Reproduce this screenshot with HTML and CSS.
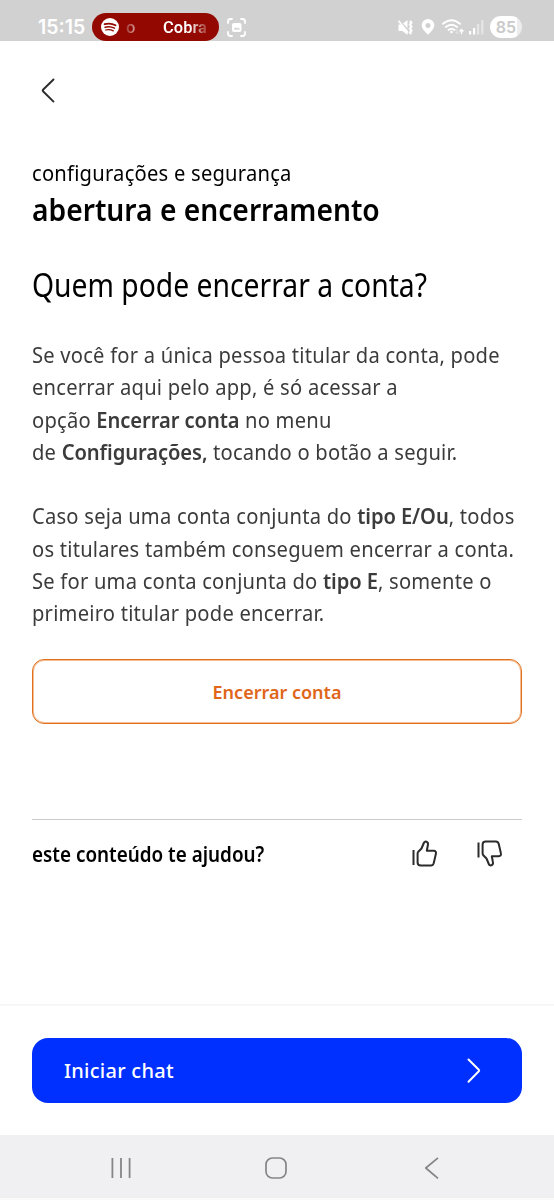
FILE: index.html
```html
<!DOCTYPE html>
<html lang="pt-BR">
<head>
<meta charset="utf-8">
<title>abertura e encerramento</title>
<link rel="stylesheet" href="styles.css">
</head>
<body>
<div class="screen">
  <header class="status">
    <span class="clock">15:15</span>
    <div class="media">
      <svg class="spotify" width="18" height="18" viewBox="0 0 18 18"><circle cx="9" cy="9" r="9" fill="#fff"/><g fill="none" stroke="#930800" stroke-linecap="round"><path d="M3.600 6.200q5.800-1.700 10.900 1.100" stroke-width="1.800"/><path d="M4.100 9.200q5-1.400 9.300 1" stroke-width="1.500"/><path d="M4.600 12q4.200-1 7.700.9" stroke-width="1.200"/></g></svg>
      <span class="track-end">o</span>
      <span class="track-start">Cobra</span>
    </div>
    <svg class="capture" width="19" height="19" viewBox="0 0 19 19" fill="none" stroke="#fff" stroke-width="1.800" stroke-linecap="round"><path d="M1 5V3.500Q1 1 3.500 1H5M14 1h1.500Q18 1 18 3.500V5M18 14v1.500Q18 18 15.500 18H14M5 18H3.500Q1 18 1 15.500V14"/><rect x="5" y="5" width="9.500" height="9" rx="2" fill="#fff" stroke="none"/><path d="M6.500 11.500l2-2.200 1.600 1.200 1.300-1 1.700 2z" fill="#d1d1d1" stroke="none"/></svg>
    <div class="indicators">
      <svg class="mute" width="17" height="17" viewBox="0 0 17 17"><path d="M1.500 5.500h3L10.500 12v4L5.500 12h-4z" fill="#fff"/><path d="M6 4.500L10.500 1v8z" fill="#fff"/><path d="M1.500 1.800L11 13.500" stroke="#fff" stroke-width="1.700"/><path d="M12.800 2l1.600 1.600-1.400 2 1.400 2-1.400 2 1.400 2-1.400 2 1.200 1.600" fill="none" stroke="#fff" stroke-width="2.200"/></svg>
      <svg class="pin" width="14" height="16" viewBox="0 0 14 16"><path fill="#fff" fill-rule="evenodd" d="M7 0a6.300 6.300 0 0 1 6.300 6.300C13.300 10 9.200 13.400 7 15.700 4.800 13.400.7 10 .7 6.300A6.300 6.300 0 0 1 7 0zm0 4a2.500 2.500 0 1 0 0 5 2.500 2.500 0 0 0 0-5z"/></svg>
      <svg class="wifi" width="22" height="17" viewBox="0 0 22 17" fill="none" stroke="#fff" stroke-linecap="round"><path d="M1 4.800q8.500-7.200 17 0M3.800 8q5.700-4.600 11.400 0M6.500 11q3-2.200 6 0" stroke-width="1.900"/><circle cx="9.500" cy="13" r="1.300" fill="#fff" stroke="none"/><path d="M15 10.500v4m-1.300-1.300L15 14.500l1.300-1.300" stroke="#e4e4e4" stroke-width="1"/><path d="M19.500 14.500v-4M18 12l1.500-1.600L21 12" stroke-width="1.400"/></svg>
      <svg class="signal" width="15" height="16" viewBox="0 0 15 16" fill="#fff"><path d="M0 12h2.200v3.500H0zM4 9h2.200v6.500H4z"/><path opacity=".45" d="M8 5h2.200v10.500H8zM12.200 1h2.200v14.500h-2.200z"/></svg>
      <span class="battery">85</span>
    </div>
  </header>

  <main class="content">
    <svg class="back" width="32" height="32" viewBox="0 0 32 32" fill="none" stroke="#2b2b2b" stroke-width="1.900" stroke-linecap="round" stroke-linejoin="round"><path d="M21.500 4.500L11 14.700Q10.300 15.500 11 16.300L21.500 26.600"/></svg>
    <p class="eyebrow">configurações e segurança</p>
    <h1 class="title">abertura e encerramento</h1>
    <h2 class="question">Quem pode encerrar a conta?</h2>
    <div class="answer">
      <p>Se você for a única pessoa titular da conta, pode<br>encerrar aqui pelo app, é só acessar a<br>opção <b>Encerrar conta</b> no menu<br>de <b>Configurações,</b> tocando o botão a seguir.</p>
      <p>Caso seja uma conta conjunta do <b>tipo E/Ou</b>, todos<br>os titulares também conseguem encerrar a conta.<br>Se for uma conta conjunta do <b>tipo E</b>, somente o<br>primeiro titular pode encerrar.</p>
    </div>
    <button class="close-account">Encerrar conta</button>
    <section class="feedback">
      <span class="feedback-label">este conteúdo te ajudou?</span>
      <svg class="thumb" width="28" height="28" viewBox="0 0 28 28" fill="none" stroke="#2b2b2b" stroke-width="2" stroke-linejoin="round"><path d="M2.500 10v15"/><path d="M7.300 11.700L10.500 8.500l2.300-5.500c.6-1.400 2-1.700 3-1.100 1.200.7 1.400 1.900 1.100 3.100L15.800 10.800h6.900c2 0 2.600 1.500 2.200 3l-2.200 9.400c-.5 1.700-1.300 2.300-2.800 2.300H9.800c-2 0-3.200-1-3.200-3v-8.800q0-1.200.7-2z"/></svg>
      <svg class="thumb thumb-down" width="28" height="28" viewBox="0 0 28 28" fill="none" stroke="#2b2b2b" stroke-width="2" stroke-linejoin="round"><path d="M2.500 2.500v15"/><path d="M7.300 15.300L10.500 18.500l2.300 5.500c.6 1.400 2 1.700 3 1.100 1.200-.7 1.400-1.900 1.100-3.100L15.800 16.200h6.900c2 0 2.600-1.500 2.200-3l-2.200-9.400c-.5-1.700-1.300-2.300-2.800-2.300H9.800c-2 0-3.200 1-3.200 3v8.800q0 1.200.7 2z"/></svg>
    </section>
  </main>

  <footer class="chat-bar">
    <button class="chat"><span>Iniciar chat</span>
      <svg width="16" height="26" viewBox="0 0 16 26" fill="none" stroke="#fff" stroke-width="2" stroke-linecap="round" stroke-linejoin="round"><path d="M2.500 1.500L12.800 11.700Q13.600 12.500 12.800 13.300L2.500 23.700"/></svg>
    </button>
  </footer>

  <nav class="system-nav">
    <svg width="22" height="22" viewBox="0 0 22 22" stroke="#858587" stroke-width="1.800"><path d="M2.400 1v20M11 1v20M19.600 1v20"/></svg>
    <svg width="22" height="22" viewBox="0 0 22 22" fill="none" stroke="#858587" stroke-width="1.700"><rect x="1" y="1" width="20" height="20" rx="6.500"/></svg>
    <svg width="22" height="22" viewBox="0 0 22 22" fill="none" stroke="#858587" stroke-width="1.700" stroke-linejoin="round"><path d="M18 .8L5.800 11 18 21.400"/></svg>
  </nav>
</div>
</body>
</html>
```
FILE: styles.css
```css
* { box-sizing: border-box; }
body { margin: 0; background: #fff; font-family: "Noto Sans", sans-serif; color: #000; }
h1, h2, p { margin: 0; white-space: nowrap; }
button { font-family: inherit; margin: 0; }
svg { display: block; flex: none; }

.screen { width: 554px; height: 1200px; display: flex; flex-direction: column; overflow: hidden; }

.status { height: 41px; background: #d1d1d1; display: flex; align-items: center; padding: 13px 32px 0 38px; color: #fff; font-family: Inter, sans-serif; }
.clock { width: 54px; font-size: 19.500px; font-weight: 600; line-height: 28px; }
.media { width: 127px; height: 28px; border-radius: 14px; background: #930800; display: flex; align-items: center; padding-left: 9px; font-family: Roboto, sans-serif; font-weight: 500; font-size: 16.500px; }
.track-end { margin-left: 7px; width: 37px; color: transparent; background: linear-gradient(90deg, #a53a33, #e0b8b5 12px); background-clip: text; -webkit-background-clip: text; }
.track-start { font-weight: 600; color: transparent; background: linear-gradient(90deg, #fff 60%, #a23830); background-clip: text; -webkit-background-clip: text; }
.capture { margin-left: 8px; }
.indicators { margin-left: auto; display: flex; align-items: center; }
.pin { margin-left: 7px; }
.wifi { margin-left: 7px; }
.signal { margin-left: 5px; }
.battery { margin-left: 6px; width: 32px; height: 22px; border-radius: 11px; background: linear-gradient(90deg, #fff 84%, #ececec 84%); color: #c9c9c9; font-size: 16px; font-weight: 600; line-height: 23px; text-align: center; }

.content { flex: 1; padding: 34px 32px 0; }
.back { margin-bottom: 51px; }

/* The headings and copy are set slightly narrower than the font's normal width. */
.eyebrow, .title, .question, .answer p, .feedback-label { transform-origin: 0 50%; }
.eyebrow { font-size: 21px; line-height: 30px; letter-spacing: .24px; transform: scaleX(.96); }
.title { font-size: 31px; line-height: 42px; font-weight: 600; transform: scaleX(.91); }
.question { margin-top: 34px; font-size: 32px; line-height: 42px; font-weight: 400; transform: scaleX(.884); }
.answer { margin-top: 33px; display: grid; gap: 32.300px; font-size: 21px; line-height: 32.300px; color: #3b3b3b; letter-spacing: .23px; }
.answer p { transform: scaleX(.96); }
.answer b { font-weight: 600; letter-spacing: -.08px; }
.close-account { display: block; width: 490px; height: 65px; margin-top: 29.500px; border: 1px solid #e0701d; box-shadow: inset 0 0 0 1px #f4bd92; border-radius: 12px; background: #fff; color: #e0661a; font-size: 18px; font-weight: 600; line-height: 24px; padding-top: 1px; }
.feedback { margin-top: 95px; border-top: 1px solid #ccc; height: 68px; display: flex; align-items: center; padding-right: 18px; }
.feedback-label { flex: 1; font-size: 21px; font-weight: 600; transform: scaleX(.898); }
.thumb-down { margin-left: 37px; }

.chat-bar { height: 131px; border-top: 2px solid #f7f7f7; padding: 32px 32px 0; }
.chat { width: 490px; height: 65px; border: 0; border-radius: 16px; background: #0030ff; color: #fff; font-size: 20px; font-weight: 500; letter-spacing: .25px; display: flex; align-items: center; justify-content: space-between; padding: 0 40px 0 32px; }

.system-nav { height: 65px; background: #f0f0f2; border-bottom: 2px solid #fafafa; display: flex; align-items: center; justify-content: space-between; padding: 2px 112px 0 110px; }
```
